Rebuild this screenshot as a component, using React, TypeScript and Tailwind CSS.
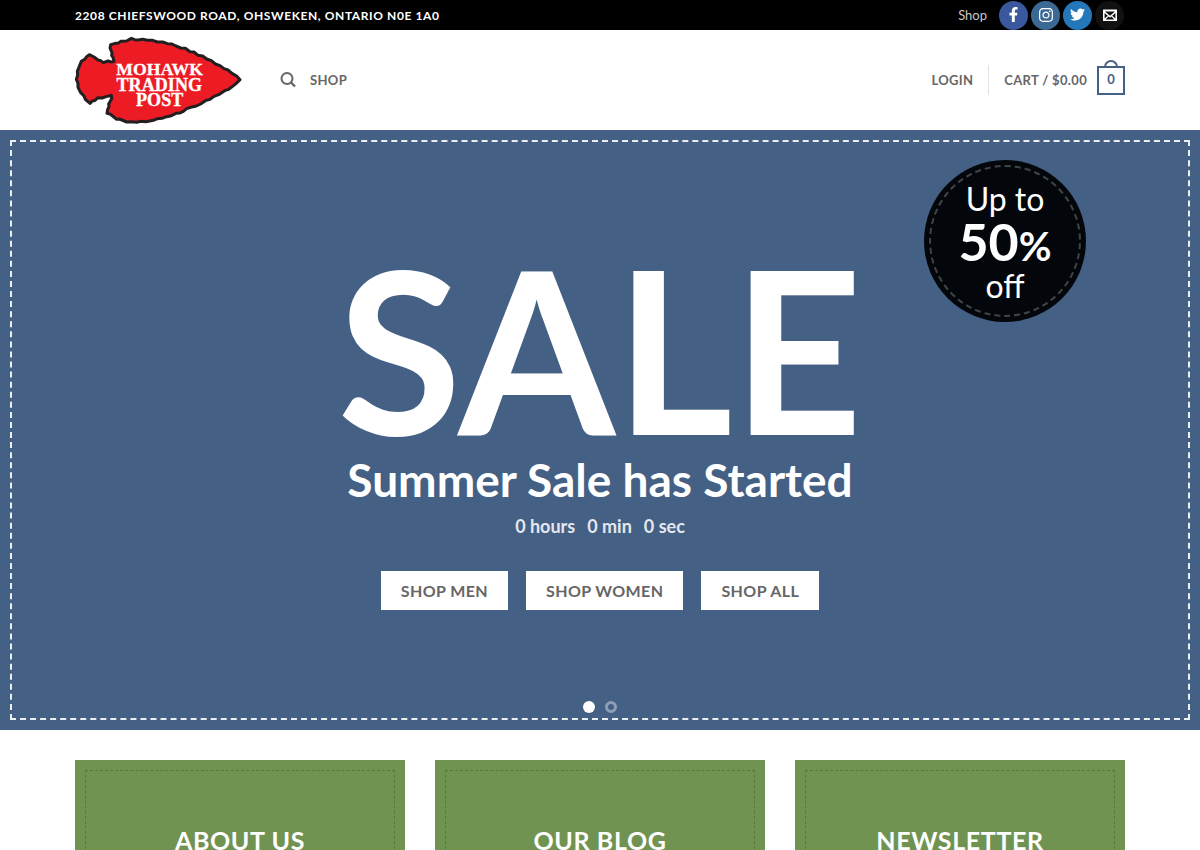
import React from 'react';
import { FaFacebookF, FaInstagram, FaTwitter } from 'react-icons/fa';

function Logo() {
  return (
    <svg viewBox="15 12 501 264" className="h-[88px] w-[167px]" role="img" aria-label="Mohawk Trading Post">
      <path
        d="M132 88 L124 90 L114 87 L100 92 L92 86 L84 84 L72 75 L58 68 L50 74 L44 82 L34 88 L30 98 L22 118 L23 130 L19 142 L24 154 L24 166 L32 182 L42 192 L46 202 L60 214 L68 206 L74 206 L84 197 L96 198 L108 194 L124 190 L125 200 L116 216 L117 224 L113 232 L111 244 L120 246 L128 252 L140 262 L148 261 L156 264 L170 270 L184 269 L200 271 L214 268 L228 269 L250 265 L262 260 L276 259 L290 254 L304 251 L318 244 L330 243 L340 238 L350 230 L362 226 L376 223 L392 216 L406 206 L420 202 L432 193 L446 188 L464 176 L474 173 L484 166 L498 155 L510 143 L500 132 L486 124 L474 114 L462 110 L450 101 L436 96 L424 86 L410 81 L398 72 L384 70 L372 60 L360 59 L346 49 L332 48 L318 42 L306 36 L292 35 L278 30 L262 30 L248 25 L232 25 L218 22 L204 24 L194 23 L184 19 L170 27 L152 28 L144 34 L136 34 L122 38 L120 48 L126 62 L125 70 L129 76 Z"
        fill="#ed1c24"
        stroke="#231f20"
        strokeWidth="9"
        strokeLinejoin="round"
      />
      <g fill="#fff" stroke="#fff" strokeWidth="1" fontFamily='"Liberation Serif", serif' fontWeight="700" textAnchor="middle">
        <text x="269" y="128" fontSize="53">MOHAWK</text>
        <text x="268" y="176" fontSize="54">TRADING</text>
        <text x="269" y="223" fontSize="54">POST</text>
      </g>
    </svg>
  );
}

function SearchIcon() {
  return (
    <svg viewBox="0 0 16 16" className="size-4" fill="none" stroke="currentColor" strokeWidth="2" aria-hidden="true">
      <circle cx="7" cy="6.5" r="5.5" />
      <path d="M11 10.500l4 4" strokeWidth="2.4" />
    </svg>
  );
}

function MailIcon() {
  return (
    <svg viewBox="0 0 16 16" className="size-4" aria-hidden="true">
      <rect x="1" y="2.5" width="14" height="11.500" rx="0.5" fill="#fff" />
      <path d="M3 4.500h10L8 8.800z M2.600 11.500V6l3.200 2.700z M13.400 11.500V6l-3.200 2.700z M3.600 12.400l3-2.800L8 10.800l1.400-1.200 3 2.800z" fill="#111" />
    </svg>
  );
}

const socials = [
  { label: 'Facebook', color: 'bg-[#3a589d]', icon: <FaFacebookF size={15} /> },
  { label: 'Instagram', color: 'bg-[#3b6994]', icon: <FaInstagram size={16} /> },
  { label: 'Twitter', color: 'bg-[#2478ba]', icon: <FaTwitter size={15} /> },
  { label: 'Email', color: 'bg-[#111]', icon: <MailIcon /> },
];

function TopBar() {
  return (
    <div className="bg-black">
      <div className="mx-auto flex h-[30px] max-w-[1080px] items-center justify-between px-[15px]">
        <strong className="pt-px text-xs font-bold tracking-wider text-white uppercase">
          2208 Chiefswood Road, Ohsweken, Ontario N0E 1A0
        </strong>
        <div className="flex items-center gap-3 pr-px">
          <a href="#shop" className="pt-px text-[13px] text-[#c8c8c8]">Shop</a>
          <div className="flex gap-[3px]">
            {socials.map((s) => (
              <a
                key={s.label}
                href={`#${s.label.toLowerCase()}`}
                aria-label={s.label}
                className={`flex size-[29px] items-center justify-center rounded-full pb-px text-white ${s.color}`}
              >
                {s.icon}
              </a>
            ))}
          </div>
        </div>
      </div>
    </div>
  );
}

function Header() {
  return (
    <header className="mx-auto flex h-[100px] max-w-[1080px] items-center justify-between px-[15px] text-[13px] font-bold tracking-wide text-[#666] uppercase">
      <div className="flex items-center">
        <a href="#home"><Logo /></a>
        <button type="button" aria-label="Search" className="ml-[38px]"><SearchIcon /></button>
        <a href="#shop" className="ml-[14px] pt-px">Shop</a>
      </div>
      <div className="flex items-center">
        <a href="#login" className="pt-px">Login</a>
        <span className="mx-[15px] h-[30px] w-px bg-[#e2e2e2]" />
        <a href="#cart" className="flex items-center">
          <span className="pt-px">Cart / $0.00</span>
          <span className="relative ml-[10px] flex h-[29px] w-7 items-center justify-center border-2 border-[#446084] text-[13px] tracking-normal text-[#446084]">
            <span className="absolute bottom-full left-1/2 h-2 w-[14px] -translate-x-1/2 rounded-t-full border-2 border-b-0 border-[#446084]" />
            0
          </span>
        </a>
      </div>
    </header>
  );
}

function Hero() {
  return (
    <section className="relative bg-[#446084] p-[10px] text-white">
      <div className="flex h-[580px] flex-col items-center border-2 border-dashed border-white/90 pt-[121px]">
        <h1 className="text-[226px] leading-[170px] font-bold">SALE</h1>
        <h2 className="mt-[17px] text-[46px] leading-[60px] font-bold">Summer Sale has Started</h2>
        <div className="mt-1 flex gap-3 text-lg leading-6 font-bold text-[#e4e8ee]">
          <span>0 hours</span>
          <span>0 min</span>
          <span>0 sec</span>
        </div>
        <div className="mt-[33px] flex gap-[18px]">
          {['Shop men', 'Shop women', 'Shop all'].map((label) => (
            <button key={label} type="button" className="h-[39px] bg-white px-5 text-base font-bold tracking-wide text-[#666] uppercase">
              {label}
            </button>
          ))}
        </div>
        <div className="mt-auto mb-[5px] flex gap-[10px]">
          <button type="button" aria-label="Slide 1" className="size-3 rounded-full bg-white" />
          <button type="button" aria-label="Slide 2" className="size-3 rounded-full border-3 border-white/40" />
        </div>
      </div>
      <div className="absolute top-[30px] right-[9.5%] size-[162px] rounded-full bg-[#03070b] p-[5px]">
        <div className="flex size-full flex-col items-center rounded-full border-2 border-dashed border-[#414345] pt-3 text-[32px] leading-[40px]">
          <span>Up to</span>
          <span className="text-[52px] leading-[44px] font-bold">50<span className="text-[40px] leading-none">%</span></span>
          <span>off</span>
        </div>
      </div>
    </section>
  );
}

function Cards() {
  return (
    <section className="mx-auto grid max-w-[1080px] grid-cols-3 gap-[30px] px-[15px] pt-[30px]">
      {['About us', 'Our blog', 'Newsletter'].map((title) => (
        <a key={title} href="#more" className="block bg-[#719352] p-[10px]">
          <div className="border border-dashed border-[#557a3a] py-[52px] text-center">
            <h3 className="text-[25px] leading-[34px] font-bold tracking-wide text-white uppercase">{title}</h3>
          </div>
        </a>
      ))}
    </section>
  );
}

export default function App() {
  return (
    <div className="h-screen overflow-hidden bg-white font-['Lato',sans-serif]">
      <TopBar />
      <Header />
      <Hero />
      <Cards />
    </div>
  );
}
